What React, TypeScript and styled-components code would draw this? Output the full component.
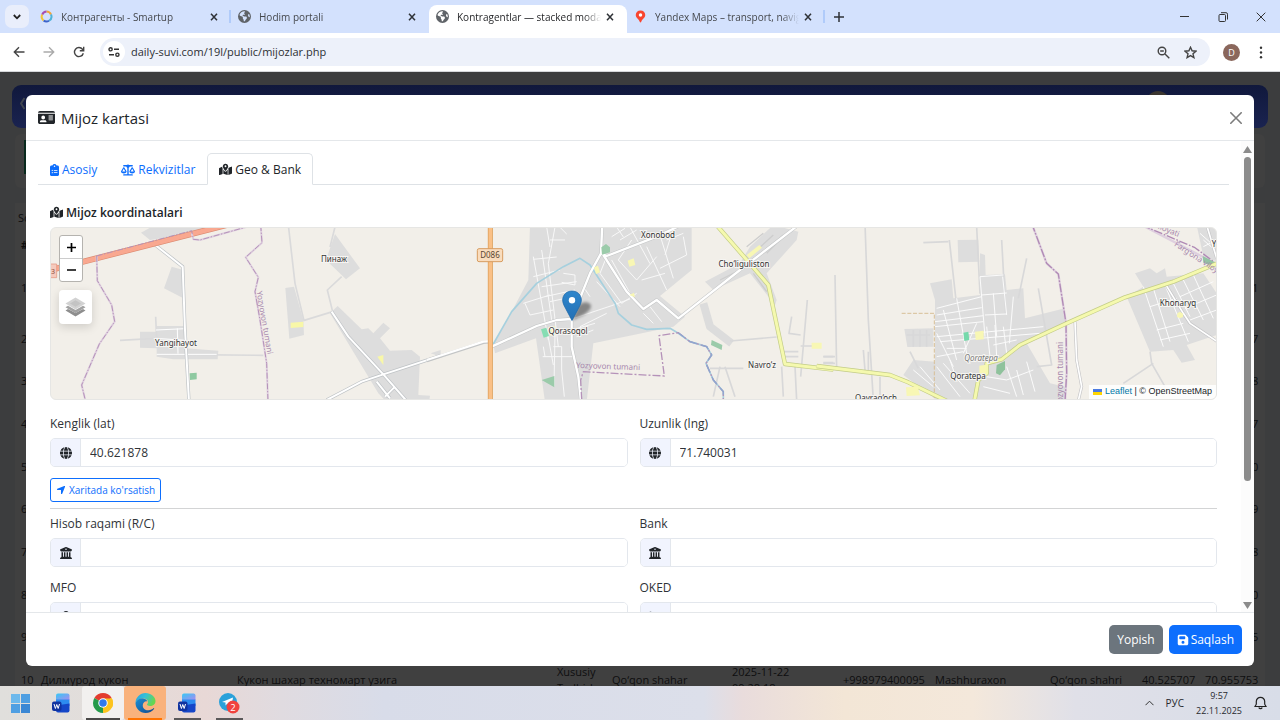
import React from 'react';
import styled, { createGlobalStyle } from 'styled-components';
import {
  FaBuildingColumns,
  FaClipboardList,
  FaEarthAmericas,
  FaFloppyDisk,
  FaGlobe,
  FaIdCard,
  FaListOl,
  FaLocationArrow,
  FaLock,
  FaMapLocationDot,
  FaScaleBalanced,
} from 'react-icons/fa6';

const UI = '"Open Sans", "Noto Sans", sans-serif';

const GlobalStyle = createGlobalStyle`
  *, *::before, *::after { box-sizing: border-box; }
  body { margin: 0; font-family: ${UI}; font-size: 12px; color: #212529; }
  button, input { font: inherit; color: inherit; }
  button { margin: 0; padding: 0; border: 0; background: none; cursor: pointer; }
  svg { display: block; flex: none; }
`;

const Screen = styled.div`
  display: flex;
  flex-direction: column;
  height: 100vh;
  overflow: hidden;
`;

/* ---------- Browser chrome ---------- */

const TabStrip = styled.header`
  display: flex;
  align-items: center;
  height: 33px;
  flex: none;
  padding-left: 5px;
  background: #d3e1fd;
`;

const TabSearch = styled.button`
  display: flex;
  align-items: center;
  justify-content: center;
  width: 24px;
  height: 23px;
  margin-right: 4px;
  border-radius: 7px;
  background: #e9eefb;
`;

const BrowserTab = styled.div<{ $active?: boolean }>`
  display: flex;
  align-items: center;
  align-self: stretch;
  width: 198px;
  margin-top: ${(p) => (p.$active ? '5px' : '0')};
  padding: ${(p) => (p.$active ? '0 13px 5px 7px' : '0 13px 0 7px')};
  border-radius: 8px 8px 0 0;
  background: ${(p) => (p.$active ? '#fff' : 'transparent')};
  color: ${(p) => (p.$active ? '#1f2023' : '#45484d')};
`;

const TabDivider = styled.span`
  width: 2px;
  height: 13px;
  margin-left: -2px;
  background: #b0cbfa;
`;

const BrowserTabTitle = styled.span`
  flex: 1;
  min-width: 0;
  margin: 0 5px 0 8px;
  overflow: hidden;
  white-space: nowrap;
  font-size: 10px;
  line-height: 16px;
  mask-image: linear-gradient(90deg, #000 88%, transparent);
`;

const PlainIcon = styled.button`
  display: flex;
  align-items: center;
  justify-content: center;
`;

const NewTab = styled(PlainIcon)`
  width: 24px;
  height: 24px;
  margin-left: 2px;
`;

const WindowControls = styled.div`
  display: flex;
  align-self: stretch;
  margin-left: auto;
`;

const WindowButton = styled(PlainIcon)`
  width: 38px;
`;

const Toolbar = styled.div`
  display: flex;
  align-items: center;
  height: 39px;
  flex: none;
  padding: 0 4px;
  border-bottom: 1px solid #d5d7da;
  background: #fff;
`;

const ToolButton = styled(PlainIcon)`
  width: 30px;
  height: 28px;
`;

const AddressBar = styled.form`
  display: flex;
  align-items: center;
  flex: 1;
  height: 28px;
  margin: 0 7px 0 6px;
  padding: 0 6px 0 3px;
  border-radius: 14px;
  background: #edf1fa;
`;

const SiteInfo = styled(PlainIcon)`
  width: 22px;
  height: 22px;
  border-radius: 11px;
  background: #fff;
`;

const AddressInput = styled.input`
  flex: 1;
  min-width: 0;
  margin-left: 6px;
  padding: 0;
  border: 0;
  outline: 0;
  background: none;
  font-size: 11px;
  line-height: 20px;
  color: #2c2f33;
`;

const AddressButton = styled(PlainIcon)`
  width: 27px;
  height: 24px;
`;

const Avatar = styled.button`
  width: 17px;
  height: 17px;
  margin: 0 6px;
  border-radius: 50%;
  background: #8a675c;
  color: #fff;
  font-size: 9px;
  line-height: 17px;
`;

/* ---------- Dimmed page ---------- */

const Viewport = styled.main`
  position: relative;
  flex: 1;
  min-height: 0;
  overflow: hidden;
  padding: 13px 12px 0;
  background: #3c3d3e;
`;

const PageNav = styled.div`
  display: flex;
  align-items: flex-start;
  justify-content: space-between;
  height: 43px;
  border-radius: 9px;
  background: linear-gradient(180deg, #10183c, #1a2350);
  padding: 6px 98px 0 8px;
`;

const PageNavDot = styled.div`
  width: 24px;
  height: 24px;
  border-radius: 50%;
  background: #3b3630;
`;

const BackChevron = styled.svg`
  margin-top: 6px;
`;

const FilterCard = styled.div`
  height: 54px;
  margin: 6px 3px 15px;
  padding: 6px 9px;
  border-radius: 6px;
  background: #404040;
`;

const FilterMark = styled.div`
  width: 60px;
  height: 34px;
  background: #08291d;
`;

const TableCard = styled.section`
  margin: 0 3px;
  padding: 0 0 0 3px;
  background: #404040;
  color: #0e0e0f;
  font-size: 11px;
`;

const SearchLine = styled.div`
  height: 29px;
  line-height: 30px;
`;

const ClientTable = styled.table`
  width: 100%;
  border-collapse: collapse;
  table-layout: fixed;

  th, td {
    height: 43px;
    padding: 0 3px;
    text-align: left;
    white-space: nowrap;
    font-weight: 400;
    line-height: 16px;
  }

  thead th { height: 26px; font-weight: 700; }
  tbody tr:nth-child(3n) td { height: 42px; }
  tbody tr:first-child td { height: 59px; }
`;

const Wide = styled.td`
  && { white-space: normal; }
`;

/* ---------- Modal ---------- */

const Modal = styled.section`
  position: absolute;
  inset: 23px 26px 20px;
  display: flex;
  flex-direction: column;
  border-radius: 6px;
  overflow: hidden;
  background: #fff;
`;

const ModalHeader = styled.header`
  display: flex;
  align-items: center;
  justify-content: space-between;
  height: 46px;
  flex: none;
  padding: 0 12px;
  border-bottom: 1px solid #e4e7ea;
`;

const ModalTitle = styled.h1`
  display: flex;
  align-items: center;
  gap: 6px;
  margin: 0;
  font-size: 15px;
  line-height: 20px;
  font-weight: 500;
`;

const ModalMain = styled.div`
  display: flex;
  flex: 1;
  min-height: 0;
`;

const ModalBody = styled.div`
  flex: 1;
  min-width: 0;
  overflow: hidden;
  padding: 12px 12px 0;
`;

const ScrollTrack = styled.div`
  display: flex;
  flex-direction: column;
  align-items: center;
  width: 13px;
  padding: 5px 0 3px;
  background: #fcfcfc;
`;

const ScrollThumb = styled.div`
  width: 7px;
  height: 70%;
  margin: 4px 0 auto;
  border-radius: 4px;
  background: #8b8b8b;
`;

const NavTabs = styled.nav`
  display: flex;
  height: 32px;
  border-bottom: 1px solid #dee2e6;
`;

const NavTab = styled.button<{ $active?: boolean }>`
  display: flex;
  align-items: center;
  gap: 3px;
  height: 32px;
  padding: 1px 11px 0;
  border: 1px solid ${(p) => (p.$active ? '#dee2e6' : 'transparent')};
  border-bottom-color: ${(p) => (p.$active ? '#fff' : 'transparent')};
  border-radius: 5px 5px 0 0;
  color: ${(p) => (p.$active ? '#212529' : '#0d6efd')};
  line-height: 18px;
`;

const NarrowClipboard = styled(FaClipboardList)`
  width: 9px;
  height: 12px;
`;

const TabPane = styled.div`
  padding: 18px 12px 0;
`;

const SectionTitle = styled.h2`
  display: flex;
  align-items: center;
  gap: 3px;
  margin: 0 0 5px;
  font-size: 12px;
  line-height: 19px;
  font-weight: 600;
`;

const FieldGrid = styled.div`
  display: grid;
  grid-template-columns: 1fr 1fr;
  gap: 11px 12px;
  color: #2f3337;
`;

const FieldLabel = styled.label`
  display: block;
  margin-bottom: 5px;
  line-height: 19px;
`;

const InputGroup = styled.div`
  display: flex;
  height: 29px;
  border: 1px solid #e3e7ed;
  border-radius: 5px;
  overflow: hidden;
`;

const InputIcon = styled.span`
  display: flex;
  align-items: center;
  justify-content: center;
  width: 30px;
  border-right: 1px solid #e3e7ed;
  background: #f1f4fe;
  color: #212529;
`;

const TextInput = styled.input`
  flex: 1;
  min-width: 0;
  padding: 0 9px;
  border: 0;
  outline: 0;
  background: #fff;
`;

const OutlineButton = styled.button`
  display: flex;
  align-items: center;
  gap: 3px;
  height: 24px;
  margin-top: 11px;
  padding: 0 5px;
  border: 1px solid #0d6efd;
  border-radius: 3px;
  color: #0d6efd;
  font-size: 10px;
`;

const Rule = styled.hr`
  height: 1px;
  margin: 6px 0 5px;
  border: 0;
  background: #d3d4d5;
`;

const ModalFooter = styled.footer`
  display: flex;
  justify-content: flex-end;
  gap: 6px;
  flex: none;
  padding: 12px;
  border-top: 1px solid #e4e7ea;
`;

const FooterButton = styled.button<{ $primary?: boolean }>`
  display: flex;
  align-items: center;
  gap: 2px;
  height: 29px;
  padding: 0 8px;
  border-radius: 5px;
  background: ${(p) => (p.$primary ? '#0d6efd' : '#6c757d')};
  color: #fff;
`;

/* ---------- Map ---------- */

const MapBox = styled.div`
  position: relative;
  height: 173px;
  margin-bottom: 14px;
  border: 1px solid #e6e6e4;
  border-radius: 6px;
  overflow: hidden;
  background: #f2efe9;
`;

const ZoomControl = styled.div`
  position: absolute;
  top: 7px;
  left: 8px;
  border: 1px solid #b5b3af;
  border-radius: 3px;
  background: #fff;
  overflow: hidden;
`;

const ZoomButton = styled.button`
  display: flex;
  align-items: center;
  justify-content: center;
  width: 22px;
  height: 22px;

  & + & { height: 23px; border-top: 1px solid #ccc; }
`;

const LayersButton = styled.button`
  position: absolute;
  top: 62px;
  left: 8px;
  display: flex;
  align-items: center;
  justify-content: center;
  width: 33px;
  height: 34px;
  border-radius: 4px;
  background: #fff;
  box-shadow: 0 3px 10px rgba(0, 0, 0, 0.15);
`;

const Attribution = styled.div`
  position: absolute;
  right: 0;
  bottom: 0;
  display: flex;
  align-items: center;
  gap: 3px;
  padding: 0 4px 1px;
  background: rgba(255, 255, 255, 0.85);
  font-family: "Liberation Sans", Arial, sans-serif;
  font-size: 9px;
  line-height: 13px;

  a { color: #0078a8; text-decoration: none; }
`;

/* ---------- Taskbar ---------- */

const Taskbar = styled.footer`
  display: flex;
  align-items: stretch;
  height: 34px;
  flex: none;
  background: linear-gradient(90deg, #e0dfdc 0, #e2dddb 8%, #e8d8d6 16%, #e0dbe0 22%, #d8dce9 30%, #dcdfea 55%, #e9dcdc 58%, #f3e6d6 66%, #f4e8db 76%, #e0e0e8 84%, #d8dde8 100%);
`;

const TaskButton = styled.button<{ $tone?: string; $line?: string }>`
  display: flex;
  align-items: center;
  justify-content: center;
  width: 42px;
  border-radius: 3px;
  background-color: ${(p) => p.$tone ?? 'transparent'};
  background-image: ${(p) => (p.$line ? `linear-gradient(${p.$line}, ${p.$line})` : 'none')};
  background-size: ${(p) => (p.$tone ? '34px' : '27px')} 2px;
  background-position: center bottom;
  background-repeat: no-repeat;

  &:first-child { width: 40px; }
`;

const Tray = styled.div`
  display: flex;
  align-items: center;
  gap: 12px;
  margin-left: auto;
  padding-right: 13px;
  font-size: 10px;
  color: #27292e;
`;

const Clock = styled.time`
  font-size: 9px;
  line-height: 15px;
  text-align: center;
`;

const CloseGlyph = () => (
  <svg width="8" height="8" viewBox="0 0 8 8" fill="none" stroke="#2f3237" strokeWidth="1.5">
    <path d="M1 .7l6 6.6M7 .7L1 7.3" />
  </svg>
);

const SmartupLogo = () => (
  <svg width="13" height="13" viewBox="0 0 26 26" fill="none" strokeWidth="4">
    <path d="M13 3a10 10 0 0 1 9 6" stroke="#f0a43a" />
    <path d="M22 9a10 10 0 0 1-4 12.500" stroke="#4fb3d8" />
    <path d="M18 21.500a10 10 0 0 1-11-.5" stroke="#3c63c9" />
    <path d="M7 21A10 10 0 0 1 4.500 9" stroke="#f0c33a" />
    <path d="M4.500 9A10 10 0 0 1 13 3" stroke="#a74fb0" />
  </svg>
);

const YandexPin = () => (
  <svg width="13" height="13" viewBox="0 0 26 26">
    <path d="M13 1C7.500 1 3.500 5 3.500 10c0 6 6.500 7.500 8.200 14.200.3 1 2.300 1 2.600 0C16 17.500 22.500 16 22.500 10 22.500 5 18.500 1 13 1z" fill="#f8452f" />
    <circle cx="13" cy="10" r="3.500" fill="#fff" />
  </svg>
);

const browserTabs = [
  { title: 'Контрагенты - Smartup', icon: <SmartupLogo />, divider: true },
  { title: 'Hodim portali', icon: <FaEarthAmericas size={13} color="#5f6368" /> },
  { title: 'Kontragentlar — stacked moda', icon: <FaEarthAmericas size={13} color="#5f6368" />, active: true },
  { title: 'Yandex Maps – transport, navig', icon: <YandexPin />, divider: true },
];

function Browser() {
  return (
    <>
      <TabStrip>
        <TabSearch aria-label="Search tabs">
          <svg width="8" height="6" viewBox="0 0 8 6" fill="none" stroke="#222" strokeWidth="1.8"><path d="M.8 1L4 4.300 7.200 1" /></svg>
        </TabSearch>
        {browserTabs.map((t) => (
          <React.Fragment key={t.title}>
            <BrowserTab $active={t.active}>
              {t.icon}
              <BrowserTabTitle>{t.title}</BrowserTabTitle>
              <PlainIcon aria-label={`Close ${t.title}`}><CloseGlyph /></PlainIcon>
            </BrowserTab>
            {t.divider && <TabDivider />}
          </React.Fragment>
        ))}
        <NewTab aria-label="New tab">
          <svg width="10" height="10" viewBox="0 0 10 10" stroke="#2f3237" strokeWidth="1.500"><path d="M5 0v10M0 5h10" /></svg>
        </NewTab>
        <WindowControls>
          <WindowButton aria-label="Minimize">
            <svg width="10" height="10" viewBox="0 0 10 10" stroke="#333"><path d="M0 4.500h9" /></svg>
          </WindowButton>
          <WindowButton aria-label="Restore">
            <svg width="10" height="10" viewBox="0 0 10 10" fill="none" stroke="#333"><rect x="1" y="2.500" width="6.500" height="7" rx="1" /><path d="M3 .7h5a1.500 1.500 0 0 1 1.500 1.500v5.300" /></svg>
          </WindowButton>
          <WindowButton aria-label="Close window">
            <svg width="10" height="10" viewBox="0 0 10 10" stroke="#333"><path d="M.7.7l8.600 8.600M9.300.7L.7 9.300" /></svg>
          </WindowButton>
        </WindowControls>
      </TabStrip>
      <Toolbar>
        <ToolButton aria-label="Back">
          <svg width="12" height="12" viewBox="0 0 12 12" fill="none" stroke="#444" strokeWidth="1.400"><path d="M11.500 6H1.500M6 1.300L1.300 6 6 10.700" /></svg>
        </ToolButton>
        <ToolButton aria-label="Forward">
          <svg width="12" height="12" viewBox="0 0 12 12" fill="none" stroke="#aaa" strokeWidth="1.400"><path d="M.5 6h10M6 1.300L10.700 6 6 10.700" /></svg>
        </ToolButton>
        <ToolButton aria-label="Reload">
          <svg width="12" height="12" viewBox="0 0 12 12" fill="none" stroke="#444" strokeWidth="1.400"><path d="M10.300 7.200A4.500 4.500 0 1 1 9.500 3.300L10.500 4.500M10.700.8v4H6.800" /></svg>
        </ToolButton>
        <AddressBar onSubmit={(e) => e.preventDefault()}>
          <SiteInfo type="button" aria-label="Site information">
            <svg width="12" height="10" viewBox="0 0 12 10" fill="none" stroke="#333" strokeWidth="1.400"><circle cx="2.600" cy="2.300" r="1.600" /><path d="M6 2.300h5M1 7.700h5" /><circle cx="9.400" cy="7.700" r="1.600" /></svg>
          </SiteInfo>
          <AddressInput aria-label="Address" defaultValue="daily-suvi.com/19l/public/mijozlar.php" />
          <AddressButton type="button" aria-label="Zoom level">
            <svg width="13" height="13" viewBox="0 0 13 13" fill="none" stroke="#444" strokeWidth="1.400"><circle cx="5" cy="5" r="3.800" /><path d="M8 8l4.300 4.300M3.200 5h3.600" /></svg>
          </AddressButton>
          <AddressButton type="button" aria-label="Bookmark">
            <svg width="13" height="13" viewBox="0 0 13 13" fill="none" stroke="#444" strokeWidth="1.400"><path d="M6.500 1.300l1.600 3.500 3.800.4-2.900 2.600.9 3.800-3.400-2-3.400 2L4 7.800 1.100 5.200l3.800-.4z" /></svg>
          </AddressButton>
        </AddressBar>
        <Avatar aria-label="Profile">D</Avatar>
        <ToolButton aria-label="Menu">
          <svg width="4" height="13" viewBox="0 0 4 13" fill="#333"><circle cx="2" cy="1.800" r="1.200" /><circle cx="2" cy="6.500" r="1.200" /><circle cx="2" cy="11.200" r="1.200" /></svg>
        </ToolButton>
      </Toolbar>
    </>
  );
}

const longitudes = ['71.740031', '70.938417', '70.942608', '71.208317', '70.955210', '71.003849', '70.962148', '70.918830', '70.947725'];
const columnWidths = [20, 196, 320, 55, 120, 111, 92, 115, 92, 63, 0];

function ClientList() {
  return (
    <>
      <PageNav>
        <BackChevron width="5" height="13" viewBox="0 0 5 13" fill="none" stroke="#404650" strokeWidth="2"><path d="M4.500 1L1 6.500 4.500 12" /></BackChevron>
        <PageNavDot />
      </PageNav>
      <FilterCard><FilterMark /></FilterCard>
      <TableCard>
        <SearchLine>Soni</SearchLine>
        <ClientTable>
          <colgroup>
            {columnWidths.map((w, i) => <col key={i} width={w || undefined} />)}
          </colgroup>
          <thead><tr><th>#</th><th colSpan={9} /><th>Lng</th></tr></thead>
          <tbody>
            {longitudes.map((lng, i) => (
              <tr key={lng}><td>{i + 1}</td><td colSpan={9} /><td>{lng}</td></tr>
            ))}
            <tr>
              <td>10</td>
              <td>Дилмурод кукон</td>
              <td>Кукон шахар техномарт узига</td>
              <Wide>Xususiy Tadbirkor</Wide>
              <td>Qo‘qon shahar</td>
              <Wide>2025-11-22<br />09:28:18</Wide>
              <td>+998979400095</td>
              <td>Mashhuraxon</td>
              <td>Qo‘qon shahri</td>
              <td>40.525707</td>
              <td>70.955753</td>
            </tr>
          </tbody>
        </ClientTable>
      </TableCard>
    </>
  );
}

function MapDrawing() {
  return (
    <svg width="100%" height="100%" viewBox="51 228 1165 171" preserveAspectRatio="xMidYMid slice" fontFamily='"Noto Sans", sans-serif'>
      <defs>
        <filter id="marker-shadow" x="-50%" y="-50%" width="200%" height="200%"><feGaussianBlur stdDeviation="1.6" /></filter>
        <linearGradient id="marker-fill" x1="0" y1="0" x2="0" y2="1"><stop stopColor="#2e86cc" /><stop offset="1" stopColor="#2470b5" /></linearGradient>
      </defs>
      {/* Western part */}
      <g transform="translate(40 220) scale(.33333)" fill="none" strokeLinejoin="round">
        <g fill="#dddddd">
          <path d="M303 38L345 15H545L450 42 330 60zM395 140l35 10v85l-58-30zM300 335h50v-17h86v67l99 7-2 26H400l-50-8v-25l-50-2zM736 204l26-4 28 100 2 45-44 11zM885 42l75 103-42 33-60-58zM870 280l23-22 72 70 20-3 15 15 30-32 20 17-30 30 30 37 65-2 25 20-5 115 35 2-2 14H1035l-20-21zM1172 400l30-10v20z" />
        </g>
        <g stroke="#dadadb" strokeWidth="5">
          <path d="M745 15l20 175 27 112M885 21l-15 60M905 170l-43 40 16 65-88 27M240 361l106-6M347 290l3 70M355 403l315 3" />
        </g>
        <path d="M348 330l88-4M346 355l90 6M412 325l2 76M350 403h180" stroke="#fff" strokeWidth="3" />
        <path d="M342 72l86 68 7 190 12 215M860 540l105-55 65-22 175-57M875 275l50 75 105 113 70 80M1010 485l40 50M1065 500l-30 30" stroke="#bfc3c6" strokeWidth="10" />
        <path d="M342 72l86 68 7 190 12 215M860 540l105-55 65-22 175-57M875 275l50 75 105 113 70 80M1010 485l40 50M1065 500l-30 30" stroke="#fff" strokeWidth="6" />
        <path d="M40 148l90-23L560 15" stroke="#dc8c72" strokeWidth="18" />
        <path d="M40 148l90-23L560 15" stroke="#f9a890" strokeWidth="14" />
        <g stroke="#e0d2e0" strokeWidth="6"><path d="M170 108l2 74 43 73 9 50-46 67-53 123 12 50M455 40l5 18 20 2 150-42M662 15l4 53-49 44 38 60-10 43 15 85 20 130 4 115" /></g>
        <g stroke="#b592b9" strokeWidth="3" strokeDasharray="18 5 4 5"><path d="M170 108l2 74 43 73 9 50-46 67-53 123 12 50M170 108L455 32l5 26 20 2 150-42M662 15l4 53-49 44 38 60-10 43 15 85 20 130 4 115" /></g>
        <path d="M752 308l38-3v16l-38 3zM1012 410l18-5v30z" fill="#f8f7a8" />
        <path d="M449 460l21-2v20l-20 2z" fill="#8fc9a1" />
        <path d="M20 132h30v41H20z" fill="#f5cabd" stroke="#e28f79" strokeWidth="2" />
      </g>
      {/* Central part */}
      <g transform="translate(430 220) scale(.33333)" fill="none" strokeLinejoin="round">
        <path fill="#dddddd" d="M300 15h485v135l-95 78 75 62-35 30-240 50-20 175H345l-27-190-123 45-5-25 55-100 50-95zM825 185l105-55 30-50 70-65 75 20-5 25-90 100 30 80-5 15-75-95-110 50z" />
        <path d="M820 250l20 70 65 50" stroke="#dcdcdc" strokeWidth="24" />
        <path d="M900 363l140-12M1132 240l-20 230M1085 290l-8 50 35 5M1112 378h45M1060 395h45M1060 410h45M1095 440l5 100M1055 440l5 90M1180 410h30M1180 428h30M870 440l-20 90M885 440l30 90M840 445h100" stroke="#d8d8d9" strokeWidth="5" />
        <path d="M350 21l10 60M375 21l-20 110 30 250M310 110l45 250M335 90l30 210M310 118l70-7M310 170l80-20M280 250l80-25M285 250l15 35 70-15M335 200l105-15M345 230l90-20M360 245l70-15M400 160l35 5v30l-40-8M360 60h45M390 22l20 20M350 325l20 110M338 410h90M370 380h25v70M395 450l8 80M375 340l-3 160M340 380l5 30M425 297l120-40 55-20M425 330l70-20M440 350l50-20M450 320l80-40M560 21l20 30M545 50l40-25M570 60l50-30M600 21l60 110M650 80l60 130M690 45l40 130M730 25l-25 80M605 60l-40 60 55 60M620 180l60-70M760 50l10 55-80 40M635 180l70-20M530 110l-20 50 65 90 45-30M545 120l55 100M500 185l70 75M460 200l20 30M640 280l30 30M660 260l35 45M710 60l50-20" stroke="#f8f8f8" strokeWidth="3" />
        <path d="M950 80l50-40M970 100l60-55M960 125l100-80M870 180l100-50M1010 100l60-60M970 160l40 55" stroke="#cdcdcd" strokeWidth="4" />
        <path d="M-10 422l170-55 25-2M185 380l135-62 60-18 45-3v83l20 90 8 75M517 10l-4 90-33 60-55 137M513 100l17 8L680 50l80-38M520 105l70 110 50 52 40-27 65 55L930 150l175-135" stroke="#c3c5c6" strokeWidth="10" />
        <path d="M190 372l55-97 75-85 80-50 50-25 30 20 75 115 10 30 40 35 45 13 70-3 25 15 35 25 50 15 15 25-17 25 22 50 30 35v30" stroke="#a6d0de" strokeWidth="5" />
        <path d="M-10 420l170-55 25-2M185 380l135-62 60-18 45-3v83l20 90 8 75M517 10l-4 90-33 60-55 137M513 100l17 8L680 50l80-38M520 105l70 110 50 52 40-27 65 55L930 150l175-135" stroke="#fff" strokeWidth="7" />
        <path d="M455 540l-3-60 8-25 243 13-16-121 58-9 35 27 50 15 15 25-17 25 22 50 30 35v30" stroke="#b592b9" strokeWidth="4" strokeDasharray="24 6 6 6" />
        <path d="M745 338l35 27 50 15 15 25-17 25 22 50 30 35v30" stroke="#8fa6cf" strokeWidth="4" strokeDasharray="26 14" />
        <path d="M181 10v540" stroke="#d99a55" strokeWidth="15" />
        <path d="M181 10v540" stroke="#fac086" strokeWidth="11" />
        <path d="M855 10l100 115 60 70 50 237 145 17" stroke="#c3cc88" strokeWidth="13" />
        <path d="M855 10l100 115 60 70 50 237 145 17" stroke="#f5f9ae" strokeWidth="9" />
        <path d="M593 122l18-7 5 20-18 5zM492 142l12-5 6 20-12 5zM598 225l14-7 3 14zM355 322l20-3v25l-15 4zM950 105l38-30 8 8-38 32zM1145 368h30v18h-30z" fill="#f8f7b4" />
        <path d="M514 82l14-10 12 10v15l-24 7zM845 360l32 15-2 15-32-15zM335 480l38-12v34z" fill="#9bcbaa" />
        <path d="M333 328l16-5 8 25-16 5z" fill="#86ddb3" />
        <rect x="142" y="86" width="76" height="39" rx="5" fill="#f9dcbd" stroke="#d79d60" strokeWidth="3" />
      </g>
      {/* Eastern part */}
      <g transform="translate(820 220) scale(.33333)" fill="none" strokeLinejoin="round">
        <path fill="#dddddd" d="M330 190l65-12 5 57 80-10V100l15 5 2 60 58-2 5 47 50-5 5 90 120-30v45l-115 60 70 120 45 10v40H350l-100-75 30-45 65 5V240zM413 60l62-1 3 66-63 2zM253 327l87-2v55l-78 1zM945 160l45-15 20 15 25-15 5 25 110-10 40 60v125l-90 30 25 45-40 8-25-38-70 5-70-165 50-30zM1130 15h65v110l-45-15z" />
        <path d="M135 10l10 290 15 240M45 165l5 285M10 410h35M10 430h35M130 390l5 60M145 395v55M180 470v60M310 68l75-3M388 60l20 180M470 21l10 200M545 60l12 220M620 115l-25 120M655 205l40 230-45 5M270 395l25 50M990 395l5 35 40 70M1000 430l-90 60M260 345h70M280 330v50M300 330v50M320 330v50" stroke="#d8d8d9" strokeWidth="5" />
        <path d="M350 265l135-35M350 285l135-22M345 305l145-18M345 320l145-15M370 270l40 150M410 235l30 165M480 170l15 180M520 220l10 130M548 170l12 115M485 225l75-6M495 285l65-3M350 350l320-30M360 365l300-25M350 340l50 100M500 320l10 90M525 315l5 95M550 320l10 80M580 230l-12 140M470 310l-40 90M480 170l70-5M380 385h60M350 410l80-15M520 375l70-15M350 440l70 90M370 430l80 90M390 420l20 60M280 450l60 50M300 440l60 70M560 440l30 90M590 450l20 75M620 425l25 90M560 480l80-30M500 470l60 10M490 500l80 20M970 200l60 180M1000 205l50 160M1035 195l70 170M1060 190l50 100M1090 180l60 120M1120 165l60 130M990 260l80-25M1010 330l80-20M1020 360l90-20M1080 230l100-45M1095 265l95-40M1110 300l80-30M1140 40l45 40M1150 80l40-20M1150 60l35 30" stroke="#fbfbfb" strokeWidth="3" />
        <path d="M765 305l5 115 15 80-12 50M1035 190l55 90 20 30 85 57M1160 15l30 100" stroke="#c6c6c8" strokeWidth="9" />
        <path d="M765 305l5 115 15 80-12 50M1035 190l55 90 20 30 85 57M1160 15l30 100" stroke="#fff" strokeWidth="5" />
        <path d="M245 280h98v260" stroke="#d8bf98" strokeWidth="3" strokeDasharray="12 5" />
        <g stroke="#dfd0df" strokeWidth="7"><path d="M635 10l45 120 35 32 23 148 2 150-5 85M965 15l215 112" /></g>
        <path d="M635 10l45 120 35 32 23 148 2 150-5 85M965 15l160 68 60 45" stroke="#b08ab5" strokeWidth="4" strokeDasharray="26 5 5 5" />
        <path d="M1148 108l40 20-18 8-20-8z" fill="#93c3a3" />
        <path d="M-10 438l220 27 55 22 120 58M463 545l12-65 25-20v-30l45-12 55-43 140-65 175-78 145-47 135-56" stroke="#c3cc88" strokeWidth="13" />
        <path d="M-10 438l220 27 55 22 120 58M463 545l12-65 25-20v-30l45-12 55-43 140-65 175-78 145-47 135-56" stroke="#f5f9ae" strokeWidth="9" />
        <path d="M465 335l26-3v26l-24 2zM478 437l20-3v26l-20 2zM258 502l35-2 7 26-40 2zM1072 280l8-5 9 6v10l-10 4-8-5z" fill="#f8f7b4" />
        <path d="M530 435l25-12v25l-15 18-12-6z" fill="#8fc29c" />
        <path d="M430 338l15-3 3 25-15 3z" fill="#75d9ab" />
      </g>
      <g fontSize="8" fill="#333" stroke="#f6f5f2" strokeWidth="2" paintOrder="stroke" textAnchor="middle">
        <text x="334" y="262">Пинаж</text>
        <text x="176" y="346">Yangihayot</text>
        <text x="658" y="238">Xonobod</text>
        <text x="744" y="267">Cho‘liguliston</text>
        <text x="568" y="334">Qorasoqol</text>
        <text x="762" y="368">Navro‘z</text>
        <text x="968" y="379">Qoratepa</text>
        <text x="981" y="361" fontStyle="italic" fill="#777">Qoratepa</text>
        <text x="876" y="401">Qayrag‘och</text>
        <text x="1178" y="306">Khonaryq</text>
        <text x="1214" y="247">Y</text>
      </g>
      <g fontSize="8" fill="#a888ad" textAnchor="middle">
        <text transform="translate(262 323) rotate(80)">Yozyovon tumani</text>
        <text transform="translate(608 369) rotate(2)">Yozyovon tumani</text>
        <text transform="translate(1063 374) rotate(-90)">Yozyovon tumani</text>
        <text transform="translate(1166 232) rotate(22)">viloyati</text>
        <text transform="translate(1199 262) rotate(33)">Farg‘ona viloyati</text>
      </g>
      <text x="490" y="258" fontSize="8" textAnchor="middle" fill="#5b4630">D086</text>
      <text x="51" y="274" fontSize="7" fill="#8b4a3c">3</text>
      {/* Marker with its shadow */}
      <g>
        <path d="M572 320l6-14c4-5 12-5 13 0 0 5-8 10-19 14z" fill="#000" opacity=".4" filter="url(#marker-shadow)" />
        <path d="M572 291c-5.500 0-9.300 4-9.300 9 0 3 1.300 5.500 2.800 8.200L572 320.500l6.500-12.300c1.500-2.700 2.800-5.200 2.800-8.200 0-5-3.800-9-9.300-9z" fill="url(#marker-fill)" stroke="#2069aa" strokeWidth=".8" />
        <circle cx="572" cy="300.300" r="3.200" fill="#fff" />
      </g>
    </svg>
  );
}

function LocationMap() {
  return (
    <MapBox>
      <MapDrawing />
      <ZoomControl>
        <ZoomButton aria-label="Zoom in">
          <svg width="9" height="9" viewBox="0 0 9 9" stroke="#000" strokeWidth="1.700"><path d="M4.500 0v9M0 4.500h9" /></svg>
        </ZoomButton>
        <ZoomButton aria-label="Zoom out">
          <svg width="9" height="9" viewBox="0 0 9 9" stroke="#000" strokeWidth="1.700"><path d="M0 4h9" /></svg>
        </ZoomButton>
      </ZoomControl>
      <LayersButton aria-label="Layers">
        <svg width="21" height="20" viewBox="0 0 21 20">
          <path d="M.5 13.500L3 12l7.500 4 7.500-4 2.500 1.500-10 6z" fill="#8e8e8e" />
          <path d="M.5 10.200L3 8.700l7.500 4.200L18 8.700l2.500 1.500-10 6z" fill="#a2a2a2" />
          <path d="M.5 6.500l10-6 10 6-10 6z" fill="#d2d2d2" />
          <path d="M5 6.500l5.500-3.300L16 6.500 10.500 9.800z" fill="#c3c3c3" />
        </svg>
      </LayersButton>
      <Attribution>
        <svg width="9" height="6" viewBox="0 0 9 6"><path fill="#4c7be1" d="M0 0h9v3H0z" /><path fill="#ffd500" d="M0 3h9v3H0z" /></svg>
        <span><a href="#leaflet">Leaflet</a> | © OpenStreetMap</span>
      </Attribution>
    </MapBox>
  );
}

interface FieldProps {
  id: string;
  label: string;
  icon: React.ReactNode;
  value?: string;
}

function Field({ id, label, icon, value }: FieldProps) {
  return (
    <div>
      <FieldLabel htmlFor={id}>{label}</FieldLabel>
      <InputGroup>
        <InputIcon>{icon}</InputIcon>
        <TextInput id={id} defaultValue={value} />
      </InputGroup>
    </div>
  );
}

function ClientModal() {
  return (
    <Modal role="dialog" aria-labelledby="modal-title">
      <ModalHeader>
        <ModalTitle id="modal-title"><FaIdCard size={17} />Mijoz kartasi</ModalTitle>
        <PlainIcon aria-label="Close">
          <svg width="12" height="12" viewBox="0 0 12 12" stroke="#7c7c7c" strokeWidth="1.600" strokeLinecap="round"><path d="M.8.8l10.400 10.400M11.200.8L.8 11.200" /></svg>
        </PlainIcon>
      </ModalHeader>
      <ModalMain>
        <ModalBody>
          <NavTabs>
            <NavTab><NarrowClipboard />Asosiy</NavTab>
            <NavTab><FaScaleBalanced size={14} />Rekvizitlar</NavTab>
            <NavTab $active><FaMapLocationDot size={13} />Geo &amp; Bank</NavTab>
          </NavTabs>
          <TabPane>
            <SectionTitle><FaMapLocationDot size={13} />Mijoz koordinatalari</SectionTitle>
            <LocationMap />
            <FieldGrid>
              <Field id="lat" label="Kenglik (lat)" icon={<FaGlobe size={12} />} value="40.621878" />
              <Field id="lng" label="Uzunlik (lng)" icon={<FaGlobe size={12} />} value="71.740031" />
            </FieldGrid>
            <OutlineButton><FaLocationArrow size={10} />Xaritada ko'rsatish</OutlineButton>
            <Rule />
            <FieldGrid>
              <Field id="account" label="Hisob raqami (R/C)" icon={<FaBuildingColumns size={12} />} />
              <Field id="bank" label="Bank" icon={<FaBuildingColumns size={12} />} />
              <Field id="mfo" label="MFO" icon={<FaLock size={12} />} />
              <Field id="oked" label="OKED" icon={<FaListOl size={12} />} />
            </FieldGrid>
          </TabPane>
        </ModalBody>
        <ScrollTrack>
          <svg width="9" height="7" viewBox="0 0 9 7" fill="#8b8b8b"><path d="M4.500 0L9 7H0z" /></svg>
          <ScrollThumb />
          <svg width="9" height="7" viewBox="0 0 9 7" fill="#8b8b8b"><path d="M4.500 7L9 0H0z" /></svg>
        </ScrollTrack>
      </ModalMain>
      <ModalFooter>
        <FooterButton>Yopish</FooterButton>
        <FooterButton $primary><FaFloppyDisk size={12} />Saqlash</FooterButton>
      </ModalFooter>
    </Modal>
  );
}

const WordLogo = ({ id }: { id: string }) => (
  <svg width="18" height="20" viewBox="0 0 36 40">
    <defs>
      <linearGradient id={id} x1="0" y1="0" x2="1" y2="1"><stop stopColor="#35c8f5" /><stop offset="1" stopColor="#a98bf0" /></linearGradient>
    </defs>
    <path d="M8 5a4 4 0 0 1 4-4h19a4 4 0 0 1 4 4v9H8z" fill={`url(#${id})`} />
    <path d="M8 13h27v13H8z" fill="#2d8bf0" />
    <path d="M8 25l27-4v14a4 4 0 0 1-4 4H12a4 4 0 0 1-4-4z" fill="#1546c8" />
    <rect x="0" y="17" width="19" height="19" rx="4" fill="#1033a0" />
    <path d="M4 22l2.800 9L9.500 23l2.800 8L15 22" fill="none" stroke="#fff" strokeWidth="2" />
  </svg>
);

function WindowsTaskbar() {
  return (
    <Taskbar>
      <TaskButton aria-label="Start">
        <svg width="19" height="19" viewBox="0 0 19 19"><path d="M0 0h9v9H0z" fill="#6db9ec" /><path d="M10 0h9v9h-9zM0 10h9v9H0z" fill="#4f9fe2" /><path d="M10 10h9v9h-9z" fill="#3a87d4" /></svg>
      </TaskButton>
      <TaskButton aria-label="Word"><WordLogo id="word-a" /></TaskButton>
      <TaskButton aria-label="Chrome" $tone="#f2f0ef" $line="#4a4848">
        <svg width="20" height="20" viewBox="0 0 40 40">
          <path d="M20 20L2.700 10A20 20 0 0 1 37.300 10z" fill="#e33b2e" />
          <path d="M20 20L37.300 10A20 20 0 0 1 20 40z" fill="#fcc31e" />
          <path d="M20 20v20A20 20 0 0 1 2.700 10z" fill="#249a4a" />
          <path d="M20 11h17.800a20 20 0 0 1-.1 18.400L28.500 24z" fill="#fcc31e" />
          <circle cx="20" cy="20" r="9.500" fill="#fff" /><circle cx="20" cy="20" r="7.500" fill="#3079ed" />
        </svg>
      </TaskButton>
      <TaskButton aria-label="Edge" $tone="#f9b27c" $line="#ff7300">
        <svg width="21" height="20" viewBox="0 0 42 40">
          <defs>
            <linearGradient id="edge-top" x1="0" y1="0" x2="1" y2=".4"><stop stopColor="#2a9fe0" /><stop offset=".5" stopColor="#35c1d8" /><stop offset="1" stopColor="#66d650" /></linearGradient>
            <linearGradient id="edge-low" x1="0" y1="0" x2="1" y2="1"><stop stopColor="#1b8fd6" /><stop offset="1" stopColor="#114a8b" /></linearGradient>
          </defs>
          <path d="M1 20C1 9 10 0 21 0s20 8 20 16c0 7-5 10-11 10-4 0-6-2-6-3 0-1 2-2 2-5 0-4-4-7-9-7C9 11 3 15 1 20z" fill="url(#edge-top)" />
          <path d="M1 20c2-6 8-10 15-9 5 .6 8 3 8.500 6-4-1.500-9 2-9 8 0 7 7 11 14 9 3-.6 6-2 8-4 1 0 1 1 .5 2C34 37 28 40 21 40 10 40 1 31 1 20z" fill="url(#edge-low)" />
        </svg>
      </TaskButton>
      <TaskButton aria-label="Word document" $line="#5a5859"><WordLogo id="word-b" /></TaskButton>
      <TaskButton aria-label="Telegram" $line="#5a5859">
        <svg width="22" height="22" viewBox="0 0 44 44" fontFamily={UI}>
          <circle cx="20" cy="20" r="18" fill="#2aa1da" />
          <path d="M8 20l22-9-3 16-8-4-4 4v-6z" fill="#fff" />
          <circle cx="30" cy="30" r="13" fill="#f0423e" />
          <text x="30" y="37" fontSize="19" fill="#fff" textAnchor="middle">2</text>
        </svg>
      </TaskButton>
      <Tray>
        <svg width="9" height="6" viewBox="0 0 9 6" fill="none" stroke="#333"><path d="M.5 5.200l4-4 4 4" /></svg>
        <span>РУС</span>
        <Clock>9:57<br />22.11.2025</Clock>
        <svg width="13" height="14" viewBox="0 0 13 14" fill="none" stroke="#222" strokeWidth="1.200"><path d="M1 10.500l1.300-2.300V5.500a4.200 4.200 0 0 1 8.400 0v2.700L12 10.500zM4.800 11.500a1.800 1.800 0 0 0 3.400 0" /></svg>
      </Tray>
    </Taskbar>
  );
}

export default function App() {
  return (
    <Screen>
      <GlobalStyle />
      <Browser />
      <Viewport>
        <ClientList />
        <ClientModal />
      </Viewport>
      <WindowsTaskbar />
    </Screen>
  );
}
